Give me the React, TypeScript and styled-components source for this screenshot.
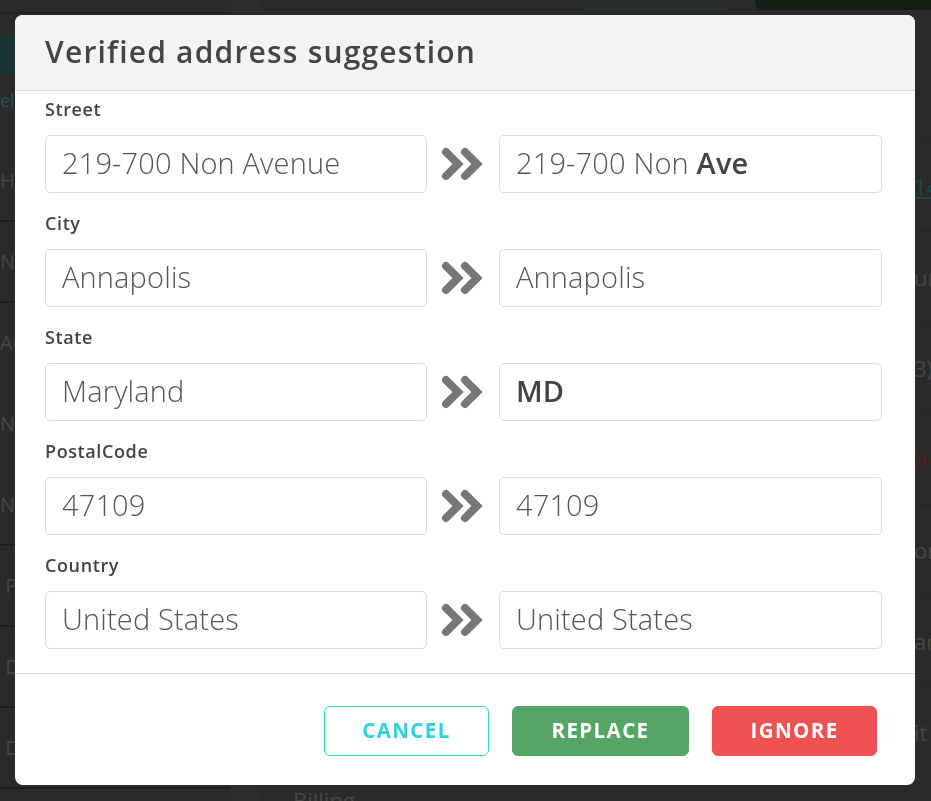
import React from "react";
import styled, { createGlobalStyle } from "styled-components";

const FONT = `"Open Sans", "Liberation Sans", sans-serif`;

const GlobalStyle = createGlobalStyle`
  html, body { margin: 0; padding: 0; }
  body { font-family: ${FONT}; background: #2b2b2b; overflow: hidden; }
  * { box-sizing: border-box; }
`;

/* ---------- dimmed page behind ---------- */
const Page = styled.div`
  position: relative;
  width: 931px;
  height: 801px;
  background: #2c2c2c;
  display: grid;
  grid-template-columns: 231px 30px 1fr;
  overflow: hidden;
  font-family: ${FONT};
`;

const SideCol = styled.div`
  display: flex;
  flex-direction: column;
`;

const SideTop = styled.div`
  height: 14px;
  border-bottom: 2px solid #232323;
`;

const SideTab = styled.div`
  margin-top: 21px;
  height: 40px;
  width: 60px;
  background: #1b3537;
  color: #5b7f80;
  font-size: 26px;
  font-weight: 600;
  display: flex;
  align-items: center;
  justify-content: flex-end;
  padding-right: 4px;
`;

const SideLink = styled.div`
  margin-top: 13px;
  height: 26px;
  color: #2b5658;
  font-size: 18px;
`;

const SideRows = styled.div`
  margin-top: 27px;
  display: flex;
  flex-direction: column;
`;

const SideRow = styled.div<{ $line?: boolean }>`
  height: 81px;
  display: flex;
  align-items: center;
  color: #4a4a4a;
  font-size: 20px;
  font-weight: 500;
  border-bottom: 2px solid ${(p) => (p.$line ? "#1f1f1f" : "transparent")};
  white-space: nowrap;
  overflow: hidden;
`;

const Gutter = styled.div`
  background: #2e2e2e;
`;

const MainCol = styled.div`
  display: flex;
  flex-direction: column;
  position: relative;
`;

const TopBar = styled.div`
  height: 10px;
  display: flex;
  gap: 23px;
  padding-left: 319px;
`;

const OutlineBtn = styled.div`
  width: 152px;
  height: 10px;
  border: 1px solid #1b3a3c;
  border-top: none;
  border-radius: 0 0 7px 7px;
`;

const FilledBtn = styled.div`
  flex: 1;
  height: 10px;
  background: #18201a;
  border-radius: 0 0 0 7px;
`;

const MainRows = styled.div`
  margin-top: 130px;
  display: flex;
  flex-direction: column;
  padding-left: 653px;
`;

const MainRow = styled.div<{ $tone?: string; $under?: boolean }>`
  height: 91px;
  display: flex;
  align-items: center;
  border-top: 1px solid #262626;
  color: ${(p) => p.$tone || "#4a4a4a"};
  text-decoration: ${(p) => (p.$under ? "underline" : "none")};
  font-size: 22px;
  white-space: nowrap;
`;

const Billing = styled.div`
  position: absolute;
  left: 32px;
  top: 785px;
  color: #4a4a4a;
  font-size: 22px;
  font-weight: 500;
`;

/* ---------- modal ---------- */
const Backdrop = styled.div`
  position: fixed;
  inset: 0;
  background: rgba(0, 0, 0, 0.04);
  display: flex;
  align-items: flex-start;
  justify-content: flex-start;
  padding: 15px 0 0 15px;
`;

const Modal = styled.div`
  width: 900px;
  height: 770px;
  background: #ffffff;
  border-radius: 8px;
  overflow: hidden;
  display: flex;
  flex-direction: column;
  font-family: ${FONT};
`;

const Header = styled.div`
  height: 76px;
  background: #f3f3f3;
  border-bottom: 1px solid #dcdcdc;
  display: flex;
  align-items: center;
  padding-left: 30px;
`;

const Title = styled.h2`
  margin: 0 0 2px;
  font-size: 30px;
  font-weight: 600;
  color: #444444;
  letter-spacing: 1.2px;
`;

const Body = styled.div`
  padding: 7px 33px 24px 30px;
  display: flex;
  flex-direction: column;
  gap: 19px;
  border-bottom: 1px solid #dcdcdc;
`;

const Field = styled.div`
  display: flex;
  flex-direction: column;
`;

const Label = styled.div`
  font-size: 18px;
  line-height: 22px;
  font-weight: 600;
  color: #444444;
  letter-spacing: 0.6px;
  margin-bottom: 15px;
`;

const Pair = styled.div`
  display: grid;
  grid-template-columns: 382px 1fr 383px;
  align-items: center;
`;

const Box = styled.div`
  height: 58px;
  border: 1px solid #dcdcdc;
  border-radius: 5px;
  display: flex;
  align-items: center;
  padding: 0 0 3px 16px;
  font-size: 29px;
  font-weight: 300;
  letter-spacing: 0.15px;
  color: #555555;
  white-space: nowrap;
`;

const Strong = styled.span`
  font-weight: 600;
  color: #444444;
`;

const ArrowCell = styled.div`
  display: flex;
  justify-content: center;
  align-items: center;
`;

const Footer = styled.div`
  flex: 1;
  display: flex;
  justify-content: flex-end;
  align-items: flex-start;
  gap: 23px;
  padding: 32px 38px 0 0;
`;

const Button = styled.button<{ $variant: "cancel" | "replace" | "ignore" }>`
  height: 50px;
  width: ${(p) => (p.$variant === "replace" ? "177px" : "165px")};
  padding: 0 0 3px;
  border-radius: 6px;
  font-family: ${FONT};
  font-size: 20.5px;
  font-weight: 700;
  letter-spacing: 1.4px;
  text-transform: uppercase;
  cursor: pointer;
  border: 1px solid
    ${(p) =>
      p.$variant === "cancel" ? "#2fd2d9" : p.$variant === "replace" ? "#55a565" : "#f05252"};
  background: ${(p) =>
    p.$variant === "cancel" ? "#ffffff" : p.$variant === "replace" ? "#55a565" : "#f05252"};
  color: ${(p) => (p.$variant === "cancel" ? "#2dd3da" : "#ffffff")};
`;

const DoubleChevron = () => (
  <svg width="44" height="34" viewBox="0 0 44 34" aria-hidden="true">
    <g fill="none" stroke="#777777" strokeWidth="8" strokeLinecap="round" strokeLinejoin="miter">
      <polyline points="5,5 17,17 5,29" />
      <polyline points="24,5 36,17 24,29" />
    </g>
  </svg>
);

type Row = { label: string; from: React.ReactNode; to: React.ReactNode };

const rows: Row[] = [
  {
    label: "Street",
    from: "219-700 Non Avenue",
    to: (
      <>
        219-700 Non&nbsp;<Strong>Ave</Strong>
      </>
    ),
  },
  { label: "City", from: "Annapolis", to: "Annapolis" },
  { label: "State", from: "Maryland", to: <Strong>MD</Strong> },
  { label: "PostalCode", from: "47109", to: "47109" },
  { label: "Country", from: "United States", to: "United States" },
];

export default function App() {
  return (
    <>
      <GlobalStyle />
      <Page>
        <SideCol>
          <SideTop />
          <SideTab>ev</SideTab>
          <SideLink>ele</SideLink>
          <SideRows>
            <SideRow $line>HE</SideRow>
            <SideRow $line>Nu</SideRow>
            <SideRow>Ac</SideRow>
            <SideRow>Nu</SideRow>
            <SideRow $line>Nu</SideRow>
            <SideRow $line>&nbsp;P</SideRow>
            <SideRow $line>&nbsp;D</SideRow>
            <SideRow $line>&nbsp;D</SideRow>
          </SideRows>
        </SideCol>
        <Gutter />
        <MainCol>
          <TopBar>
            <OutlineBtn />
            <FilledBtn />
          </TopBar>
          <MainRows>
            <MainRow $tone="#1e4a4c" $under>
              14
            </MainRow>
            <MainRow>un</MainRow>
            <MainRow>3)</MainRow>
            <MainRow $tone="#5a1f1f">9-</MainRow>
            <MainRow>om</MainRow>
            <MainRow>an</MainRow>
            <MainRow>it</MainRow>
          </MainRows>
          <Billing>Billing</Billing>
        </MainCol>
      </Page>
      <Backdrop>
        <Modal role="dialog" aria-labelledby="dlg-title">
          <Header>
            <Title id="dlg-title">Verified address suggestion</Title>
          </Header>
          <Body>
            {rows.map((r) => (
              <Field key={r.label}>
                <Label>{r.label}</Label>
                <Pair>
                  <Box>{r.from}</Box>
                  <ArrowCell>
                    <DoubleChevron />
                  </ArrowCell>
                  <Box>{r.to}</Box>
                </Pair>
              </Field>
            ))}
          </Body>
          <Footer>
            <Button $variant="cancel">Cancel</Button>
            <Button $variant="replace">Replace</Button>
            <Button $variant="ignore">Ignore</Button>
          </Footer>
        </Modal>
      </Backdrop>
    </>
  );
}
